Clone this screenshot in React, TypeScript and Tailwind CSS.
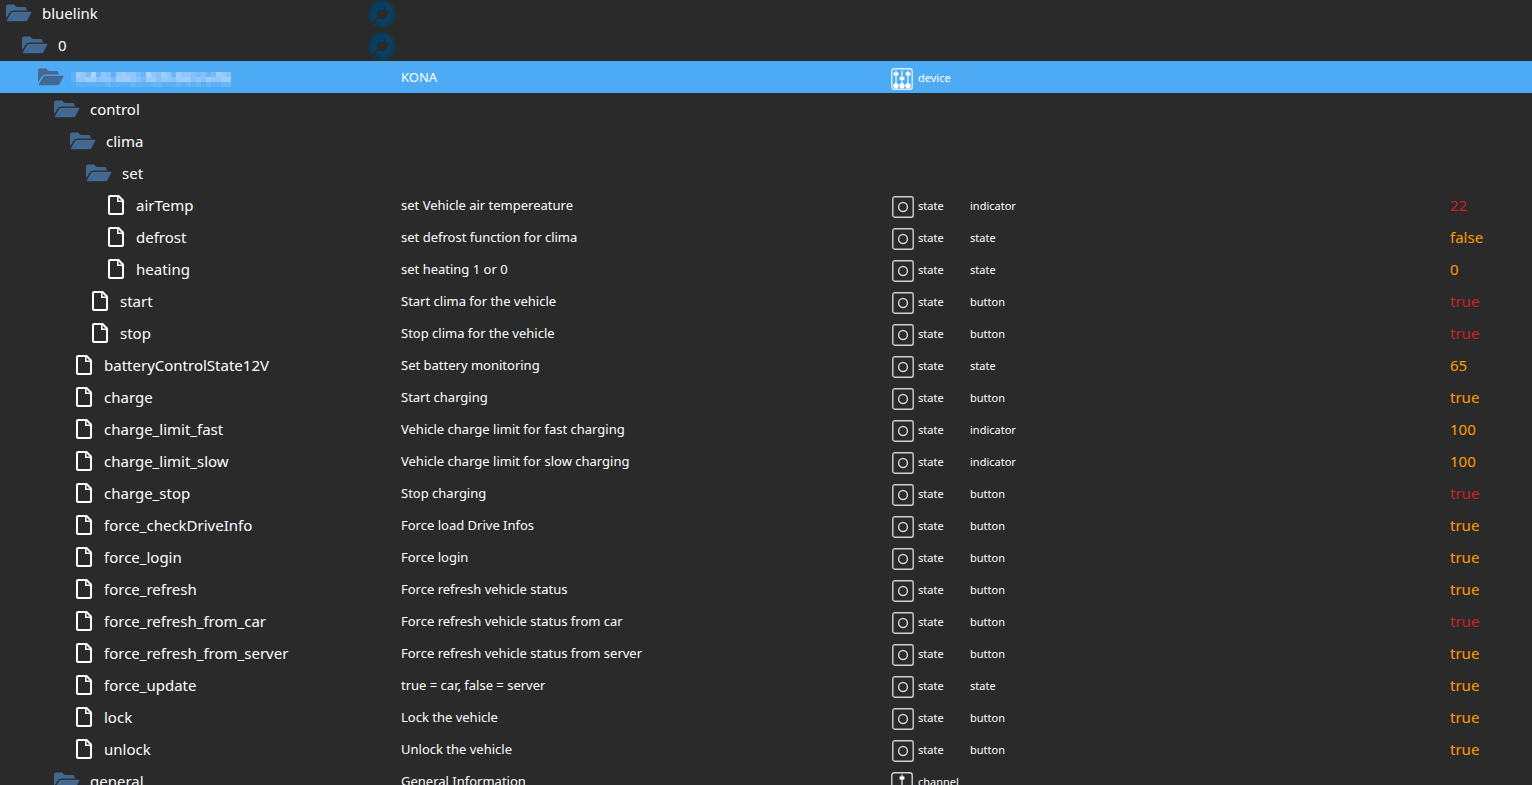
import React from "react";

type Kind = "device" | "channel" | "state";
type Row = {
  name: string;
  depth: number;
  desc?: string;
  kind?: Kind;
  role?: string;
  value?: string;
  pending?: boolean;
  selected?: boolean;
  adapter?: boolean;
};

const rows: Row[] = [
  { name: "bluelink", depth: 0, adapter: true },
  { name: "0", depth: 1, adapter: true },
  { name: "", depth: 2, desc: "KONA", kind: "device", selected: true },
  { name: "control", depth: 3 },
  { name: "clima", depth: 4 },
  { name: "set", depth: 5 },
  { name: "airTemp", depth: 6, desc: "set Vehicle air tempereature", kind: "state", role: "indicator", value: "22", pending: true },
  { name: "defrost", depth: 6, desc: "set defrost function for clima", kind: "state", role: "state", value: "false" },
  { name: "heating", depth: 6, desc: "set heating 1 or 0", kind: "state", role: "state", value: "0" },
  { name: "start", depth: 5, desc: "Start clima for the vehicle", kind: "state", role: "button", value: "true", pending: true },
  { name: "stop", depth: 5, desc: "Stop clima for the vehicle", kind: "state", role: "button", value: "true", pending: true },
  { name: "batteryControlState12V", depth: 4, desc: "Set battery monitoring", kind: "state", role: "state", value: "65" },
  { name: "charge", depth: 4, desc: "Start charging", kind: "state", role: "button", value: "true" },
  { name: "charge_limit_fast", depth: 4, desc: "Vehicle charge limit for fast charging", kind: "state", role: "indicator", value: "100" },
  { name: "charge_limit_slow", depth: 4, desc: "Vehicle charge limit for slow charging", kind: "state", role: "indicator", value: "100" },
  { name: "charge_stop", depth: 4, desc: "Stop charging", kind: "state", role: "button", value: "true", pending: true },
  { name: "force_checkDriveInfo", depth: 4, desc: "Force load Drive Infos", kind: "state", role: "button", value: "true" },
  { name: "force_login", depth: 4, desc: "Force login", kind: "state", role: "button", value: "true" },
  { name: "force_refresh", depth: 4, desc: "Force refresh vehicle status", kind: "state", role: "button", value: "true" },
  { name: "force_refresh_from_car", depth: 4, desc: "Force refresh vehicle status from car", kind: "state", role: "button", value: "true", pending: true },
  { name: "force_refresh_from_server", depth: 4, desc: "Force refresh vehicle status from server", kind: "state", role: "button", value: "true" },
  { name: "force_update", depth: 4, desc: "true = car, false = server", kind: "state", role: "state", value: "true" },
  { name: "lock", depth: 4, desc: "Lock the vehicle", kind: "state", role: "button", value: "true" },
  { name: "unlock", depth: 4, desc: "Unlock the vehicle", kind: "state", role: "button", value: "true" },
  { name: "general", depth: 3, desc: "General Information", kind: "channel" },
];

function FolderIcon() {
  return (
    <svg className="h-[18px] w-[26px] shrink-0 fill-[#436993]" viewBox="0 0 26 18" aria-hidden="true">
      <path d="M0 14.2V2.4Q0 .6 1.8.6H8.2L10.8 3.1H18.6Q20.6 3.1 20.6 5V6.4H7.4Q5 6.4 3.8 8.4Z" />
      <path d="M5 8.9Q5.7 7.7 7 7.7H24.6Q26 7.7 25.3 9L21.5 16Q20.8 17.2 19.4 17.2H1.6Q.2 17.2 .9 16Z" />
    </svg>
  );
}

function FileIcon() {
  return (
    <svg className="h-5 w-4 shrink-0 fill-none stroke-white stroke-2" viewBox="0 0 16 20" aria-hidden="true">
      <path d="M2 1H10.5L15 5.5V18Q15 19 14 19H2Q1 19 1 18V2Q1 1 2 1Z" />
      <path className="stroke-[1.5]" d="M9.8 1V6.2H15" />
    </svg>
  );
}

function AdapterIcon() {
  return (
    <svg className="h-7 w-7" viewBox="0 0 28 28" aria-hidden="true">
      <circle cx="14" cy="14" r="13.2" className="fill-none stroke-[#073f63] stroke-[1.2]" />
      <circle cx="14" cy="14" r="11.8" className="fill-[#073f63]" />
      <path d="M3.5 24.5L10.5 17.5" className="stroke-[#2a2a2a] stroke-[1.8]" />
      <path
        d="M9.6 17.6Q8.4 13.4 10.6 10.8Q13 8.6 15.6 9.4L16.6 8.8L20.2 12.6L19.4 13.6Q19.8 16.4 17.6 18.2Q14.6 19.8 11.4 18.6L10.4 18.4Z"
        className="fill-[#2a2a2a]"
      />
      <path d="M16.2 9.8L17.6 7.2M19 12.6L21.4 11" className="stroke-[#2a2a2a] stroke-[1.6]" />
    </svg>
  );
}

function KindIcon({ kind }: { kind: Kind }) {
  if (kind === "state") {
    return (
      <svg className="ml-px h-[22px] w-[22px] shrink-0 fill-none stroke-[#d0d0d0]" viewBox="0 0 22 22" aria-hidden="true">
        <rect x=".8" y=".8" width="20.4" height="20.4" rx="2" className="stroke-[1.4]" />
        <circle cx="11" cy="11" r="4.4" className="stroke-[1.5]" />
      </svg>
    );
  }
  const sliders = kind === "device" ? [[5, 6], [11, 10.5], [17, 6]] : [[11, 6]];
  return (
    <svg className="mr-px h-[22px] w-[22px] shrink-0 fill-white stroke-white" viewBox="0 0 22 22" aria-hidden="true">
      <rect x=".8" y=".8" width="20.4" height="20.4" rx="2.5" className="fill-none stroke-[1.4] opacity-80" />
      {sliders.map(([x, y]) => (
        <g key={x}>
          <path d={`M${x} 2.5V15`} className="stroke-[1.4] opacity-80" />
          <rect x={x - 2.4} y={y - 1.6} width="4.8" height="3.2" className="stroke-none" />
          <circle cx={x} cy="17.8" r="2.7" className="stroke-none" />
        </g>
      ))}
    </svg>
  );
}

const mask = [
  "16537254156553275465265543423654",
  "15566455366654366455466645465566",
  "01111112111121112211121212121122",
];

function MaskedName() {
  return (
    <svg className="h-[15px] w-[160px] shrink-0 fill-[#d6e5ff]" viewBox="0 0 160 15" role="img" aria-label="Hidden name" shapeRendering="crispEdges">
      {mask.map((line, y) =>
        line.split("").map((level, x) => (
          <rect key={`${x}-${y}`} x={x * 5} y={y * 5} width="5" height="5" opacity={Number(level) / 10} />
        )),
      )}
    </svg>
  );
}

export default function App() {
  return (
    <main className="h-screen overflow-hidden bg-[#2a2a2a] font-['Noto_Sans','Open_Sans',sans-serif] text-white">
      <table className="-mt-[3px] w-full table-fixed border-collapse text-left">
        <colgroup>
          <col className="w-[368px]" />
          <col className="w-[523px]" />
          <col className="w-[79px]" />
          <col />
          <col className="w-[82px]" />
        </colgroup>
        <tbody>
          {rows.map((row, i) => {
            const isFile = row.kind === "state";
            return (
              <tr key={i} className={row.selected ? "h-8 bg-[#4dabf5]" : "h-8"}>
                <td className="p-0">
                  <div className="flex h-8 items-center whitespace-nowrap" style={{ paddingLeft: row.depth * 16 + (isFile ? 12 : 6) }}>
                    {isFile ? <FileIcon /> : <FolderIcon />}
                    {row.name ? (
                      <span className={isFile ? "ml-3 text-[15px] leading-6" : "ml-[10px] text-[15px] leading-6"}>{row.name}</span>
                    ) : (
                      <span className="ml-[7px] pt-[5px]"><MaskedName /></span>
                    )}
                  </div>
                </td>
                <td className="p-0">
                  <div className="flex h-8 items-center whitespace-nowrap text-[13px] leading-6">
                    <span className="flex w-[33px] shrink-0 pt-0.5">{row.adapter && <AdapterIcon />}</span>
                    {row.desc}
                  </div>
                </td>
                <td className="p-0">
                  {row.kind && (
                    <div className="flex h-8 items-center gap-1 pt-[3px] text-[11px] leading-4">
                      <KindIcon kind={row.kind} />
                      <span className="pb-px">{row.kind}</span>
                    </div>
                  )}
                </td>
                <td className="px-0 pt-0.5 pb-0 text-[11px] leading-4">{row.role}</td>
                <td className={row.pending ? "p-0 text-[15px] leading-6 text-[#cc2228]" : "p-0 text-[15px] leading-6 text-[#ff9d00]"}>
                  {row.value}
                </td>
              </tr>
            );
          })}
        </tbody>
      </table>
    </main>
  );
}
